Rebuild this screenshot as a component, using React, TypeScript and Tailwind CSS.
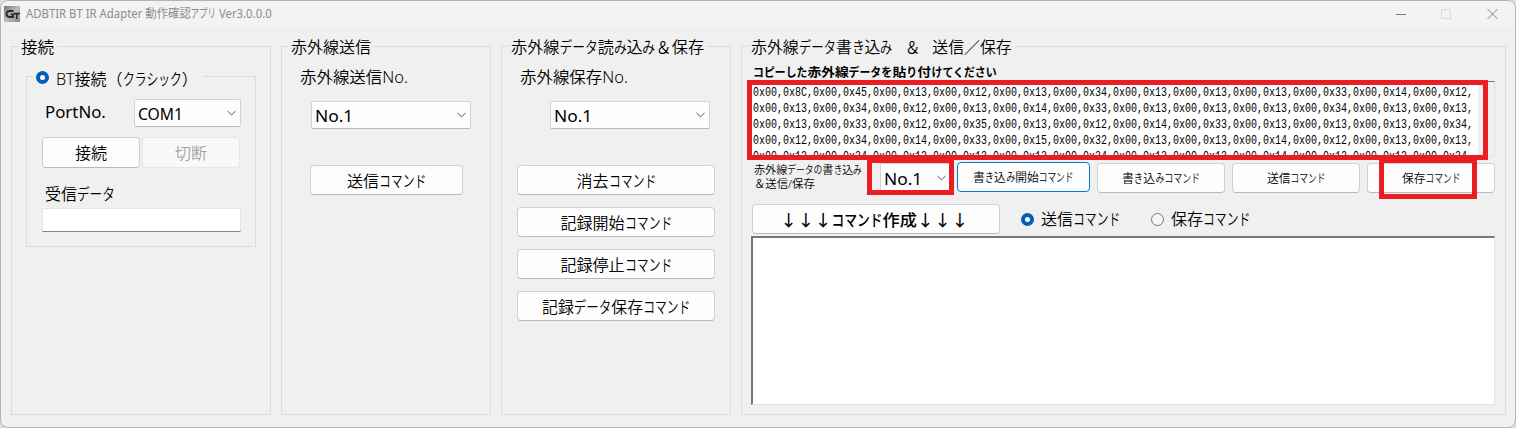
import { useLayoutEffect, useRef, type ReactNode } from "react";

const KANA = /([\u30A1-\u30FA\u3041-\u3096\u30FC\u3000]+)/;

function kanaRatio(ch: string) {
  if (ch === "ー") return 0.88;
  if (/[\u3041-\u3096]/.test(ch)) return 0.79;
  return 0.74;
}

/* Text with condensed kana, fitted to an exact advance width. */
function T({ children, w, className = "" }: { children: string; w: number; className?: string }) {
  const ref = useRef<HTMLSpanElement>(null);
  useLayoutEffect(() => {
    const el = ref.current;
    if (el) el.style.transform = `scaleX(${w / el.offsetWidth})`;
  }, [w]);
  return (
    <span className={`flex shrink-0 whitespace-nowrap ${className}`} style={{ width: w }}>
      <span ref={ref} className="shrink-0 origin-left">
        {children.split(KANA).map((part, i) => {
          if (i % 2 === 0) return part;
          const total = [...part].reduce((sum, ch) => sum + kanaRatio(ch), 0);
          const k = total / part.length;
          return (
            <span key={i} className="inline-block origin-left" style={{ width: `${total}em`, transform: `scaleX(${k})` }}>
              {part}
            </span>
          );
        })}
      </span>
    </span>
  );
}

function Group({ title, titleClass, className, children }: { title: ReactNode; titleClass: string; className: string; children: ReactNode }) {
  return (
    <section className={`flex shrink-0 flex-col items-start border border-[#dcdcdc] ${className}`}>
      <div className={`-mt-[11px] flex h-5 items-center bg-[#f0f0f0] ${titleClass}`}>{title}</div>
      {children}
    </section>
  );
}

function Button({ children, className = "" }: { children: ReactNode; className?: string }) {
  return (
    <button className={`flex shrink-0 items-center justify-center rounded border border-[#d0d0d0] border-b-[#b9b9b9] bg-[#fdfdfd] pt-px ${className}`}>
      {children}
    </button>
  );
}

function Select({ value, w, className }: { value: string; w: number; className: string }) {
  return (
    <div className={`flex shrink-0 items-center justify-between rounded-[2px] border border-[#d2d2d2] border-b-[#b9b9b9] bg-[#fdfdfd] pl-[3px] pr-1 font-normal ${className}`}>
      <T w={w} className="pt-[2px]">{value}</T>
      <svg width="9" height="6" viewBox="0 0 9 6" fill="none" stroke="#555" strokeWidth="1">
        <path d="M.5 1 4.5 4.8 8.5 1" />
      </svg>
    </div>
  );
}

function Radio({ on = false }: { on?: boolean }) {
  return on ? (
    <span className="size-[13px] shrink-0 rounded-full border-4 border-[#005fb8] bg-white" />
  ) : (
    <span className="size-[13px] shrink-0 rounded-full border border-[#777] bg-[#f5f5f5]" />
  );
}

const DATA = [
  ["8C", "45", "13", "12", "13", "34", "13", "13", "13", "33", "14", "12"],
  ["13", "34", "12", "13", "14", "33", "13", "13", "13", "34", "13", "13"],
  ["13", "33", "12", "35", "13", "12", "14", "33", "13", "13", "13", "34"],
  ["12", "34", "14", "33", "15", "32", "13", "13", "14", "12", "13", "13"],
  ["12", "34", "12", "13", "13", "34", "13", "13", "14", "12", "12", "34"],
];

export default function App() {
  return (
    <div className="relative h-[428px] w-[1516px] overflow-hidden bg-[#dedede] font-['Noto_Sans','Noto_Sans_CJK_JP',sans-serif] text-[16px] font-[350] leading-5 text-black">
      <div className="flex h-[428px] w-[1516px] flex-col overflow-hidden rounded-lg border border-[#b4b4b4] bg-[#f0f0f0]">
        <header className="flex h-[25px] shrink-0 items-center bg-[#f3f3f3] pl-[3px] pr-[17px] text-[12px] font-normal text-[#8c8c8c]">
          <svg width="16" height="16" viewBox="0 0 16 16" className="mr-[6px] shrink-0">
            <defs>
              <linearGradient id="logo" x1="0" y1="0" x2="1" y2="1">
                <stop offset="0" stopColor="#777" />
                <stop offset=".5" stopColor="#bcbcbc" />
                <stop offset="1" stopColor="#888" />
              </linearGradient>
            </defs>
            <rect width="16" height="16" fill="url(#logo)" />
            <path d="M9.5 5H6Q2.5 5 2.5 8T6 11h3V8.4H6.5" fill="none" stroke="#292929" strokeWidth="1.8" />
            <path d="M9.5 7.6H16M12.7 7v6" stroke="#292929" strokeWidth="1.8" />
          </svg>
          <T w={246}>ADBTIR BT IR Adapter 動作確認アプリ Ver3.0.0.0</T>
          <svg width="102" height="12" viewBox="0 0 102 12" fill="none" className="ml-auto">
            <path d="M0 6.5h10" stroke="#7d7d7d" />
            <rect x="45.5" y="1.5" width="9" height="9" stroke="#d9d9d9" />
            <path d="m91.5 1 10 10m0-10-10 10" stroke="#858585" />
          </svg>
        </header>

        <main className="flex gap-[10px] pl-[10px] pt-5">
          <Group className="h-[369px] w-[260px]" titleClass="ml-[6px] px-[3px] pt-[2px]" title={<T w={33}>接続</T>}>
            <Group
              className="ml-[14px] mt-5 h-[171px] w-[230px]"
              titleClass="ml-[6px] w-[170px] pl-[3px] pt-[2px]"
              title={<><Radio on /><T w={142} className="ml-[7px] pt-[3px]">BT接続（クラシック）</T></>}
            >
              <div className="ml-[18px] mt-[13px] flex h-[28px] items-center">
                <T w={61} className="mr-7 pb-[2px] font-normal">PortNo.</T>
                <Select value="COM1" w={45} className="h-7 w-[107px]" />
              </div>
              <div className="ml-[15px] mt-[10px] flex gap-[2px]">
                <Button className="h-[31px] w-[98px]"><T w={32}>接続</T></Button>
                <Button className="h-[31px] w-[98px] border-[#e6e6e6]! bg-[#f9f9f9]! text-[#a3a3a3]"><T w={32}>切断</T></Button>
              </div>
              <T w={70} className="ml-[18px] mt-[16px]">受信データ</T>
              <div className="ml-[15px] mt-1 h-6 w-[199px] border border-[#e5e5e5] border-b-[#858585] bg-white" />
            </Group>
          </Group>

          <Group className="h-[369px] w-[210px]" titleClass="ml-[6px] px-[3px] pt-[2px]" title={<T w={80}>赤外線送信</T>}>
            <T w={108} className="ml-[18px] mt-[11px]">赤外線送信No.</T>
            <Select value="No.1" w={38} className="ml-[29px] mt-[14px] h-7 w-[160px]" />
            <Button className="ml-7 mt-9 h-[30px] w-[153px]"><T w={79}>送信コマンド</T></Button>
          </Group>

          <Group className="h-[369px] w-[230px]" titleClass="ml-[6px] px-[3px] pt-[2px]" title={<T w={193}>赤外線データ読み込み＆保存</T>}>
            <T w={108} className="ml-[18px] mt-[11px]">赤外線保存No.</T>
            <Select value="No.1" w={38} className="ml-12 mt-[14px] h-7 w-[160px]" />
            <div className="ml-[15px] mt-9 flex flex-col gap-3">
              <Button className="h-[30px] w-[198px]"><T w={79}>消去コマンド</T></Button>
              <Button className="h-[30px] w-[198px]"><T w={111}>記録開始コマンド</T></Button>
              <Button className="h-[30px] w-[198px]"><T w={111}>記録停止コマンド</T></Button>
              <Button className="h-[30px] w-[198px]"><T w={148}>記録データ保存コマンド</T></Button>
            </div>
          </Group>

          <Group className="h-[369px] w-[765px]" titleClass="ml-[6px] px-[3px] pt-[2px]" title={<T w={261}>赤外線データ書き込み　＆　送信／保存</T>}>
            <T w={243} className="ml-[11px] mt-[8px] text-[12px] leading-[17px] font-bold">コピーした赤外線データを貼り付けてください</T>
            <div className="ml-[9px] flex h-[76px] w-[744px] overflow-hidden border border-[#777] border-b-[#e3e3e3] border-r-[#e3e3e3] bg-white">
              <div className="flex w-[726px] flex-col overflow-hidden pl-px pt-[3px]">
                {DATA.map((row, i) => (
                  <T key={i} w={720} className="h-4 font-['Liberation_Mono',monospace] text-[12.5px] leading-4">
                    {row.map((v) => `0x00,0x${v},`).join("")}
                  </T>
                ))}
              </div>
              <div className="grow bg-[#f0f0f0]" />
            </div>
            <div className="ml-[9px] mt-[5px] flex h-[31px] text-[12px]">
              <div className="ml-[3px] flex w-[126px] flex-col pt-px text-[11px] leading-[14px]">
                <T w={108}>赤外線データの書き込み</T>
                <T w={61}>＆送信/保存</T>
              </div>
              <Select value="No.1" w={38} className="mt-px h-[29px] w-[71px] text-[16px]" />
              <Button className="ml-[6px] h-[30px] w-[133px] border-[#0078d4]!"><T w={101}>書き込み開始コマンド</T></Button>
              <Button className="ml-[7px] mt-px h-[30px] w-[128px]"><T w={78}>書き込みコマンド</T></Button>
              <Button className="ml-[7px] mt-px h-[30px] w-[128px]"><T w={59}>送信コマンド</T></Button>
              <Button className="ml-[7px] mt-px h-[30px] w-[128px]"><T w={59}>保存コマンド</T></Button>
            </div>
            <div className="ml-[10px] mt-[11px] flex h-[30px] items-center">
              <Button className="h-[30px] w-[248px] pr-[4px] font-medium"><T w={188}>↓↓↓コマンド作成↓↓↓</T></Button>
              <div className="ml-[21px] flex items-center gap-[7px]"><Radio on /><T w={79}>送信コマンド</T></div>
              <div className="ml-[31px] flex items-center gap-[7px]"><Radio /><T w={79}>保存コマンド</T></div>
            </div>
            <div className="ml-[9px] mt-[2px] h-[169px] w-[744px] border-2 border-b border-r border-[#777] border-b-[#e3e3e3] border-r-[#e3e3e3] bg-white" />
          </Group>
        </main>
      </div>

      <div className="absolute left-[747px] top-[80px] h-[80px] w-[741px] border-[5px] border-[#ed1c24]" />
      <div className="absolute left-[867px] top-[158px] h-[37px] w-[87px] border-[5px] border-[#ed1c24]" />
      <div className="absolute left-[1379px] top-[158px] h-[41px] w-[98px] border-[5px] border-[#ed1c24]" />
    </div>
  );
}
